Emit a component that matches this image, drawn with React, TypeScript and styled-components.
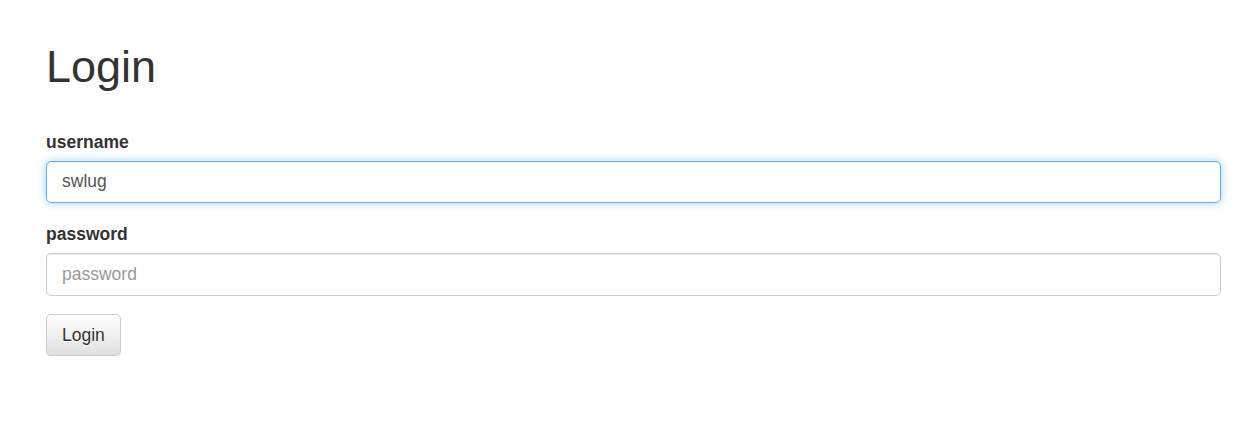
import styled, { createGlobalStyle } from 'styled-components';
import { useState } from 'react';

const GlobalStyle = createGlobalStyle`
  * { box-sizing: border-box; }
  body {
    margin: 0;
    background: #fff;
    color: #333;
    font-family: 'Liberation Sans', Arial, sans-serif;
    font-size: 17.5px;
    line-height: 1.42857;
  }
`;

const Container = styled.div`
  padding: 42px 16px 0 46px;
`;

const Title = styled.h1`
  margin: 0 0 38px;
  font-size: 45px;
  font-weight: 500;
  line-height: 1.1;
  color: #333;
`;

const Group = styled.div`
  margin-bottom: 18.75px;
`;

const Label = styled.label`
  display: inline-block;
  margin-bottom: 6.25px;
  font-weight: 700;
`;

const Input = styled.input<{ $focused?: boolean }>`
  display: block;
  width: 100%;
  height: 42.5px;
  padding: 7.5px 15px;
  font-family: inherit;
  font-size: 17.5px;
  line-height: 1.42857;
  color: #555;
  background: #fff;
  border: 1px solid ${(p) => (p.$focused ? '#66afe9' : '#ccc')};
  border-radius: 5px;
  outline: 0;
  box-shadow: ${(p) =>
    p.$focused
      ? 'inset 0 1px 1px rgba(0,0,0,.075), 0 0 8px rgba(102,175,233,.6)'
      : 'inset 0 1px 1px rgba(0,0,0,.075)'};

  &::placeholder {
    color: #999;
  }
`;

const Button = styled.button`
  display: inline-block;
  padding: 7.5px 15px;
  font-family: inherit;
  font-size: 17.5px;
  line-height: 1.42857;
  color: #333;
  text-shadow: 0 1px 0 #fff;
  background-image: linear-gradient(to bottom, #fff 0, #e0e0e0 100%);
  border: 1px solid #ccc;
  border-radius: 5px;
  box-shadow: inset 0 1px 0 rgba(255,255,255,.15), 0 1px 1px rgba(0,0,0,.075);
  cursor: pointer;
`;

const App = () => {
  const [username, setUsername] = useState('swlug');
  const [password, setPassword] = useState('');
  return (
    <>
      <GlobalStyle />
      <Container>
        <Title>Login</Title>
        <form onSubmit={(e) => e.preventDefault()}>
          <Group>
            <Label htmlFor='username'>username</Label>
            <Input
              id='username'
              $focused
              value={username}
              onChange={(e) => setUsername(e.target.value)}
            />
          </Group>
          <Group>
            <Label htmlFor='password'>password</Label>
            <Input
              id='password'
              type='password'
              placeholder='password'
              value={password}
              onChange={(e) => setPassword(e.target.value)}
            />
          </Group>
          <Button type='submit'>Login</Button>
        </form>
      </Container>
    </>
  );
};

export default App;
